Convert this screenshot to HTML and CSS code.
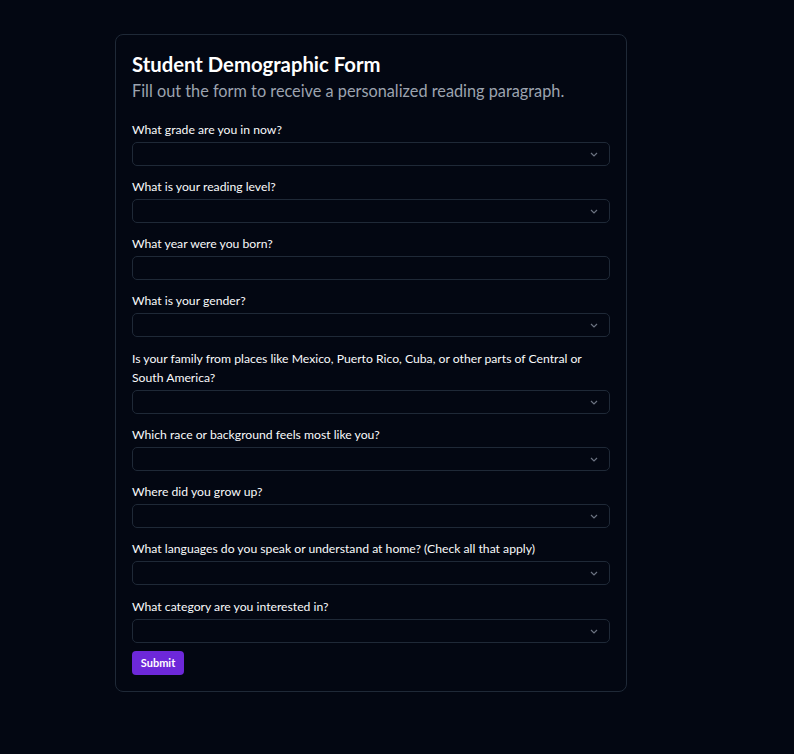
FILE: index.html
```html
<!DOCTYPE html>
<html lang="en">
<head>
<meta charset="utf-8">
<title>Student Demographic Form</title>
<link rel="stylesheet" href="styles.css">
</head>
<body>
<div class="card">
  <h1 class="title">Student Demographic Form</h1>
  <p class="subtitle">Fill out the form to receive a personalized reading paragraph.</p>
  <form class="form">
    <div class="field">
      <label class="label">What grade are you in now?</label>
      <div class="select-wrap"><select class="select"><option></option></select><svg class="chev" viewBox="0 0 8 5" width="8" height="5"><path d="M1 1l3 3 3-3" fill="none" stroke="currentColor" stroke-width="1.2"/></svg></div>
    </div>
    <div class="field">
      <label class="label">What is your reading level?</label>
      <div class="select-wrap"><select class="select"><option></option></select><svg class="chev" viewBox="0 0 8 5" width="8" height="5"><path d="M1 1l3 3 3-3" fill="none" stroke="currentColor" stroke-width="1.2"/></svg></div>
    </div>
    <div class="field">
      <label class="label">What year were you born?</label>
      <input class="input" type="text">
    </div>
    <div class="field">
      <label class="label">What is your gender?</label>
      <div class="select-wrap"><select class="select"><option></option></select><svg class="chev" viewBox="0 0 8 5" width="8" height="5"><path d="M1 1l3 3 3-3" fill="none" stroke="currentColor" stroke-width="1.2"/></svg></div>
    </div>
    <div class="field">
      <label class="label">Is your family from places like Mexico, Puerto Rico, Cuba, or other parts of Central or South America?</label>
      <div class="select-wrap"><select class="select"><option></option></select><svg class="chev" viewBox="0 0 8 5" width="8" height="5"><path d="M1 1l3 3 3-3" fill="none" stroke="currentColor" stroke-width="1.2"/></svg></div>
    </div>
    <div class="field">
      <label class="label">Which race or background feels most like you?</label>
      <div class="select-wrap"><select class="select"><option></option></select><svg class="chev" viewBox="0 0 8 5" width="8" height="5"><path d="M1 1l3 3 3-3" fill="none" stroke="currentColor" stroke-width="1.2"/></svg></div>
    </div>
    <div class="field">
      <label class="label">Where did you grow up?</label>
      <div class="select-wrap"><select class="select"><option></option></select><svg class="chev" viewBox="0 0 8 5" width="8" height="5"><path d="M1 1l3 3 3-3" fill="none" stroke="currentColor" stroke-width="1.2"/></svg></div>
    </div>
    <div class="field">
      <label class="label">What languages do you speak or understand at home? (Check all that apply)</label>
      <div class="select-wrap"><select class="select"><option></option></select><svg class="chev" viewBox="0 0 8 5" width="8" height="5"><path d="M1 1l3 3 3-3" fill="none" stroke="currentColor" stroke-width="1.2"/></svg></div>
    </div>
    <div class="field">
      <label class="label">What category are you interested in?</label>
      <div class="select-wrap"><select class="select"><option></option></select><svg class="chev" viewBox="0 0 8 5" width="8" height="5"><path d="M1 1l3 3 3-3" fill="none" stroke="currentColor" stroke-width="1.2"/></svg></div>
    </div>
    <div class="actions">
      <button class="btn" type="button">Submit</button>
    </div>
  </form>
</div>
</body>
</html>
```
FILE: styles.css
```css
html, body {
  margin: 0;
  padding: 0;
  background: #030712;
}
body {
  padding: 34px 0 0 115px;
  font-family: "Lato", "Noto Sans", sans-serif;
  color: #f9fafb;
  min-height: 754px;
  box-sizing: border-box;
}
.card {
  width: 512px;
  box-sizing: border-box;
  border: 1px solid #1f2937;
  border-radius: 8px;
  background: #030712;
  padding: 16px;
}
.title {
  margin: 0;
  font-size: 20.3px;
  line-height: 26px;
  padding-bottom: 2px;
  font-weight: 700;
  color: #ffffff;
}
.subtitle {
  margin: 0;
  font-size: 16.3px;
  line-height: 24px;
  color: #9ca3af;
}
.form {
  margin-top: 17px;
  display: flex;
  flex-direction: column;
  gap: 11.125px;
}
.field {
  display: flex;
  flex-direction: column;
}
.label {
  font-size: 12.2px;
  line-height: 19.5px;
  margin-bottom: 2.5px;
  color: #f9fafb;
}
.select-wrap {
  position: relative;
}
.select, .input {
  display: block;
  width: 100%;
  height: 24px;
  box-sizing: border-box;
  margin: 0;
  border: 1px solid #1f2937;
  border-radius: 5px;
  background: #030712;
  color: #f9fafb;
  appearance: none;
  -webkit-appearance: none;
  padding: 0 8px;
  font: inherit;
  font-size: 12px;
  outline: none;
}
.chev {
  position: absolute;
  right: 12px;
  top: 10px;
  color: #6b7280;
  pointer-events: none;
}
.actions {
  margin-top: -3px;
}
.btn {
  display: block;
  width: 52px;
  height: 24px;
  border: none;
  border-radius: 4px;
  background: #6d28d9;
  color: #ffffff;
  font-family: inherit;
  font-weight: 700;
  font-size: 11px;
  padding: 0;
  cursor: pointer;
}
```
